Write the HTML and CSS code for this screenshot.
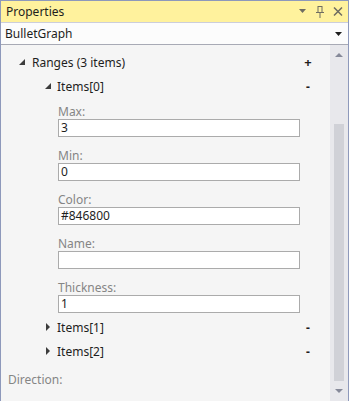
FILE: index.html
```html
<!DOCTYPE html>
<html>
<head>
  <meta name="viewport" content="width=device-width, initial-scale=1">
  <link rel="stylesheet" href="styles.css">
  <title>Properties</title>
</head>
<body>

<div class="panel">
  <div class="titleBar">
    <span class="title">Properties</span>
    <div class="tools">
      <svg class="tool" width="8" height="5" viewBox="0 0 8 5"><polygon points="0,0 7,0 3.5,4" fill="#6f6d62"/></svg>
      <svg class="tool" width="8" height="12" viewBox="0 0 8 12">
        <rect x="2" y="0.5" width="4" height="6" fill="none" stroke="#6f6d62"/>
        <rect x="0" y="6" width="8" height="1" fill="#6f6d62"/>
        <rect x="3.5" y="7" width="1" height="5" fill="#6f6d62"/>
      </svg>
      <svg class="tool" width="10" height="9" viewBox="0 0 10 9"><path d="M1 0.5 L9 8.5 M9 0.5 L1 8.5" stroke="#6f6d62" stroke-width="1.5"/></svg>
    </div>
  </div>

  <div class="selector">
    <span>BulletGraph</span>
    <svg width="7" height="4" viewBox="0 0 7 4"><polygon points="0,0 7,0 3.5,4" fill="#1e1e1e"/></svg>
  </div>

  <div class="body">
    <div class="tree">
      <div class="row level1">
        <svg class="toggle" width="13" height="7" viewBox="0 0 13 7"><polygon points="6,0 6,6 0,6" fill="#3c3c3c"/></svg>
        <span class="rowText">Ranges (3 items)</span>
        <span class="action">+</span>
      </div>
      <div class="row level2">
        <svg class="toggle" width="12" height="7" viewBox="0 0 12 7"><polygon points="6,0 6,6 0,6" fill="#3c3c3c"/></svg>
        <span class="rowText">Items[0]</span>
        <span class="action minus">-</span>
      </div>

      <div class="fields">
        <div class="field">
          <div class="label">Max:</div>
          <div class="input">3</div>
        </div>
        <div class="field">
          <div class="label">Min:</div>
          <div class="input">0</div>
        </div>
        <div class="field">
          <div class="label">Color:</div>
          <div class="input">#846800</div>
        </div>
        <div class="field">
          <div class="label">Name:</div>
          <div class="input"></div>
        </div>
        <div class="field">
          <div class="label">Thickness:</div>
          <div class="input">1</div>
        </div>
      </div>

      <div class="row level2">
        <svg class="toggle" width="12" height="9" viewBox="0 0 12 9"><polygon points="1,0 5,4 1,8" fill="#3c3c3c"/></svg>
        <span class="rowText">Items[1]</span>
        <span class="action minus">-</span>
      </div>
      <div class="row level2">
        <svg class="toggle" width="12" height="9" viewBox="0 0 12 9"><polygon points="1,0 5,4 1,8" fill="#3c3c3c"/></svg>
        <span class="rowText">Items[2]</span>
        <span class="action minus">-</span>
      </div>

      <div class="row direction">Direction:</div>
    </div>

    <div class="scrollbar">
      <svg class="arrow" width="8" height="5" viewBox="0 0 8 5"><polygon points="0,5 8,5 4,1" fill="#868999"/></svg>
      <div class="track"><div class="thumb"></div></div>
      <svg class="arrow" width="8" height="5" viewBox="0 0 8 5"><polygon points="0,0 8,0 4,4" fill="#868999"/></svg>
    </div>
  </div>
</div>

</body>
</html>
```

FILE: styles.css
```css
html, body {
  margin: 0;
  height: 100%;
}

body {
  font-family: 'Noto Sans', sans-serif;
  font-size: 12px;
  color: #1e1e1e;
  background-color: #f5f5f5;
}

.panel {
  height: 401px;
  display: flex;
  flex-direction: column;
  border-top: 1px solid #8e99bb;
  border-left: 1px solid #8e99bb;
  border-right: 1px solid #8e99bb;
  box-sizing: border-box;
}

.titleBar {
  height: 21px;
  background-color: #fff29d;
  display: flex;
  align-items: center;
  padding-left: 5px;
  border-bottom: 1px solid #cccedb;
}

.title {
  flex: 1;
}

.tools {
  display: flex;
  align-items: center;
  gap: 9px;
  padding-right: 5px;
}

.selector {
  height: 21px;
  background-color: #fcfcfc;
  display: flex;
  align-items: center;
  padding: 0 6px 0 4px;
  border-bottom: 1px solid #a8aab5;
}

.selector span {
  flex: 1;
}

.body {
  flex: 1;
  display: flex;
  background-color: #f5f5f5;
}

.tree {
  flex: 1;
  padding-top: 5px;
}

.row {
  height: 24px;
  display: flex;
  align-items: center;
}

.level1 {
  padding-left: 18px;
}

.level2 {
  padding-left: 44px;
}

.toggle {
  flex-shrink: 0;
}

.rowText {
  flex: 1;
}

.action {
  width: 16px;
  margin-right: 14px;
  text-align: center;
  font-weight: bold;
  font-size: 13px;
}

.minus {
  font-size: 12px;
}

.fields {
  padding: 7px 0 2px 57px;
  display: flex;
  flex-direction: column;
  gap: 12px;
}

.label {
  height: 14px;
  line-height: 14px;
  color: #858585;
}

.input {
  width: 242px;
  height: 18px;
  box-sizing: border-box;
  border: 1px solid #ababab;
  background-color: #ffffff;
  line-height: 16px;
  padding-left: 2px;
}

.direction {
  padding-left: 7px;
  margin-top: 4px;
  color: #858585;
}

.scrollbar {
  width: 18px;
  background-color: #e8e8ec;
  display: flex;
  flex-direction: column;
  align-items: center;
}

.arrow {
  margin: 7px 0;
}

.track {
  flex: 1;
  width: 100%;
  display: flex;
  flex-direction: column;
  align-items: center;
  padding-top: 60px;
  padding-bottom: 1px;
  box-sizing: border-box;
}

.thumb {
  width: 10px;
  flex: 1;
  background-color: #d0d1d7;
}
```
